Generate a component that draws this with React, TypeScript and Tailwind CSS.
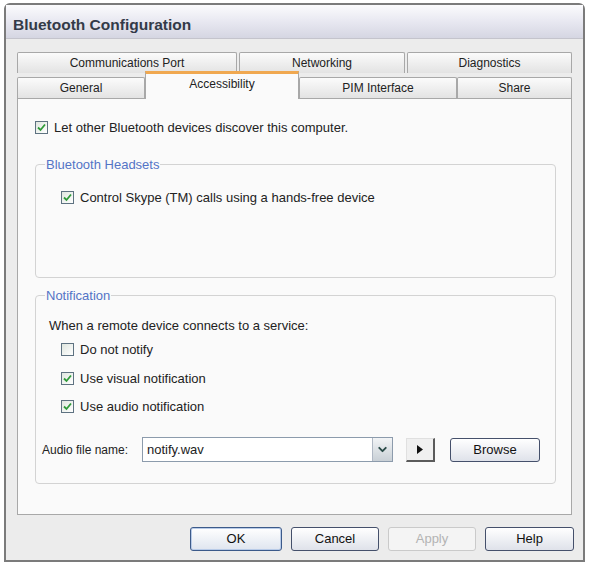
import { ChevronDown } from "lucide-react";

const font = { fontFamily: '"Liberation Sans", Arial, sans-serif' };

const CheckBox = ({ checked, label }: { checked: boolean; label: string }) => (
  <label className="flex items-center gap-[6px] text-[13px] leading-[15px] text-[#222]">
    <span className="w-[13px] h-[13px] border border-[#5e7281] bg-gradient-to-br from-[#dfe6df] to-[#ffffff] flex items-center justify-center shrink-0">
      {checked && (
        <svg width="9" height="9" viewBox="0 0 9 9">
          <path d="M1 4.5 L3.5 7 L8 1.5" stroke="#2f9a39" strokeWidth="1.8" fill="none" />
        </svg>
      )}
    </span>
    <span>{label}</span>
  </label>
);

const Group = ({ title, className, children }: { title: string; className?: string; children: React.ReactNode }) => (
  <fieldset className={"border border-[#d3d3d3] rounded-[4px] px-[13px] m-0 " + (className ?? "")}>
    <legend className="text-[13px] leading-[15px] text-[#5474c6] px-[1px] ml-[-4px]">{title}</legend>
    {children}
  </fieldset>
);

const Button = ({ label, w, disabled, primary }: { label: string; w: string; disabled?: boolean; primary?: boolean }) => (
  <button
    className={
      "h-[24px] rounded-[3px] text-[13px] flex items-center justify-center " +
      w +
      (disabled
        ? " border border-[#cacaca] bg-[#f4f4f4] text-[#b3b3b3]"
        : primary
        ? " border border-[#3c5a8a] bg-gradient-to-b from-[#ffffff] to-[#dfe5ef] text-[#111] shadow-[inset_0_0_0_1px_#b8cbe8]"
        : " border border-[#45506b] bg-gradient-to-b from-[#ffffff] to-[#dfe2ea] text-[#111]")
    }
  >
    {label}
  </button>
);

const Tab = ({ label, w, selected }: { label: string; w: string; selected?: boolean }) => (
  <div
    className={
      "text-[12px] text-[#222] flex items-center justify-center " +
      w +
      (selected
        ? " h-[28px] -mt-[3px] bg-[#fafafa] border-t-[3px] border-t-[#f0a850] border-x border-x-[#a8a8a8] relative z-10 -mb-px"
        : " h-[21px] mt-[1px] bg-gradient-to-b from-[#fbfbfb] to-[#e3e3e3] border border-[#a8a8a8] border-b-0 rounded-t-[2px]")
    }
  >
    <span className={selected ? "-mt-[5px]" : ""}>{label}</span>
  </div>
);

export default function App() {
  return (
    <div className="w-[590px] h-[565px] bg-white pt-[3px] pl-[4px]" style={font}>
      <div className="w-[581px] h-[559px] border-2 border-[#7b7b7b] rounded-t-[6px] bg-[#ececec] flex flex-col">
        <div className="h-[34px] bg-gradient-to-b from-[#fbfbfd] via-[#e8e8f1] to-[#d5d6e2] border-b border-[#c4c4cc] flex items-center pl-[7px] pt-[6px]">
          <span className="text-[15.5px] font-bold text-[#333a48]">Bluetooth Configuration</span>
        </div>
        <div className="flex-1 pl-[11px] pr-[7px] pt-[12px] flex flex-col">
          <div className="flex flex-col w-[555px]">
            <div className="flex gap-[2px]">
              <Tab label="Communications Port" w="w-[220px]" />
              <Tab label="Networking" w="w-[166px]" />
              <Tab label="Diagnostics" w="w-[165px]" />
            </div>
            <div className="flex h-[25px] items-end">
              <Tab label="General" w="w-[128px]" />
              <Tab label="Accessibility" w="w-[154px]" selected />
              <Tab label="PIM Interface" w="w-[158px]" />
              <Tab label="Share" w="w-[115px]" />
            </div>
          </div>
          <div className="w-[555px] h-[417px] bg-[#fafafa] border border-[#a8a8a8] pt-[21px] pl-[17px] pr-[15px] flex flex-col">
            <CheckBox checked label="Let other Bluetooth devices discover this computer." />
            <Group title="Bluetooth Headsets" className="mt-[22px] h-[121px] pt-[18px]">
              <div className="pl-[12px]">
                <CheckBox checked label="Control Skype (TM) calls using a hands-free device" />
              </div>
            </Group>
            <Group title="Notification" className="mt-[10px] h-[196px] pt-[15px]">
              <div className="text-[13px] leading-[15px] text-[#222]">When a remote device connects to a service:</div>
              <div className="pl-[12px] flex flex-col gap-[13.5px] mt-[9px]">
                <CheckBox checked={false} label="Do not notify" />
                <CheckBox checked label="Use visual notification" />
                <CheckBox checked label="Use audio notification" />
              </div>
              <div className="flex items-center mt-[23px] -ml-[7px]">
                <span className="text-[12px] text-[#222] w-[100px]">Audio file name:</span>
                <div className="w-[251px] h-[25px] border border-[#8c9bac] bg-white flex items-center">
                  <span className="flex-1 pl-[4px] text-[13px] text-[#222]">notify.wav</span>
                  <span className="w-[20px] h-[23px] border-l border-[#b0b8c4] bg-gradient-to-b from-[#f2f4f6] to-[#c9d0d6] flex items-center justify-center">
                    <ChevronDown className="w-[13px] h-[13px] text-[#2a4a48]" strokeWidth={3.5} />
                  </span>
                </div>
                <div className="ml-[13px] w-[29px] h-[24px] bg-[#f0f0f0] border-r-2 border-b-2 border-[#5b5b5b] border-l border-t border-l-[#e0e0e0] border-t-[#e0e0e0] flex items-center justify-center">
                  <svg width="6" height="9" viewBox="0 0 6 9">
                    <path d="M0 0 L6 4.5 L0 9 Z" fill="#111" />
                  </svg>
                </div>
                <div className="ml-[15px]">
                  <Button label="Browse" w="w-[90px]" />
                </div>
              </div>
            </Group>
          </div>
          <div className="flex justify-end gap-[9px] mt-[12px] pr-[2px]">
            <Button label="OK" w="w-[92px]" primary />
            <Button label="Cancel" w="w-[88px]" />
            <Button label="Apply" w="w-[88px]" disabled />
            <Button label="Help" w="w-[89px]" />
          </div>
        </div>
      </div>
    </div>
  );
}
